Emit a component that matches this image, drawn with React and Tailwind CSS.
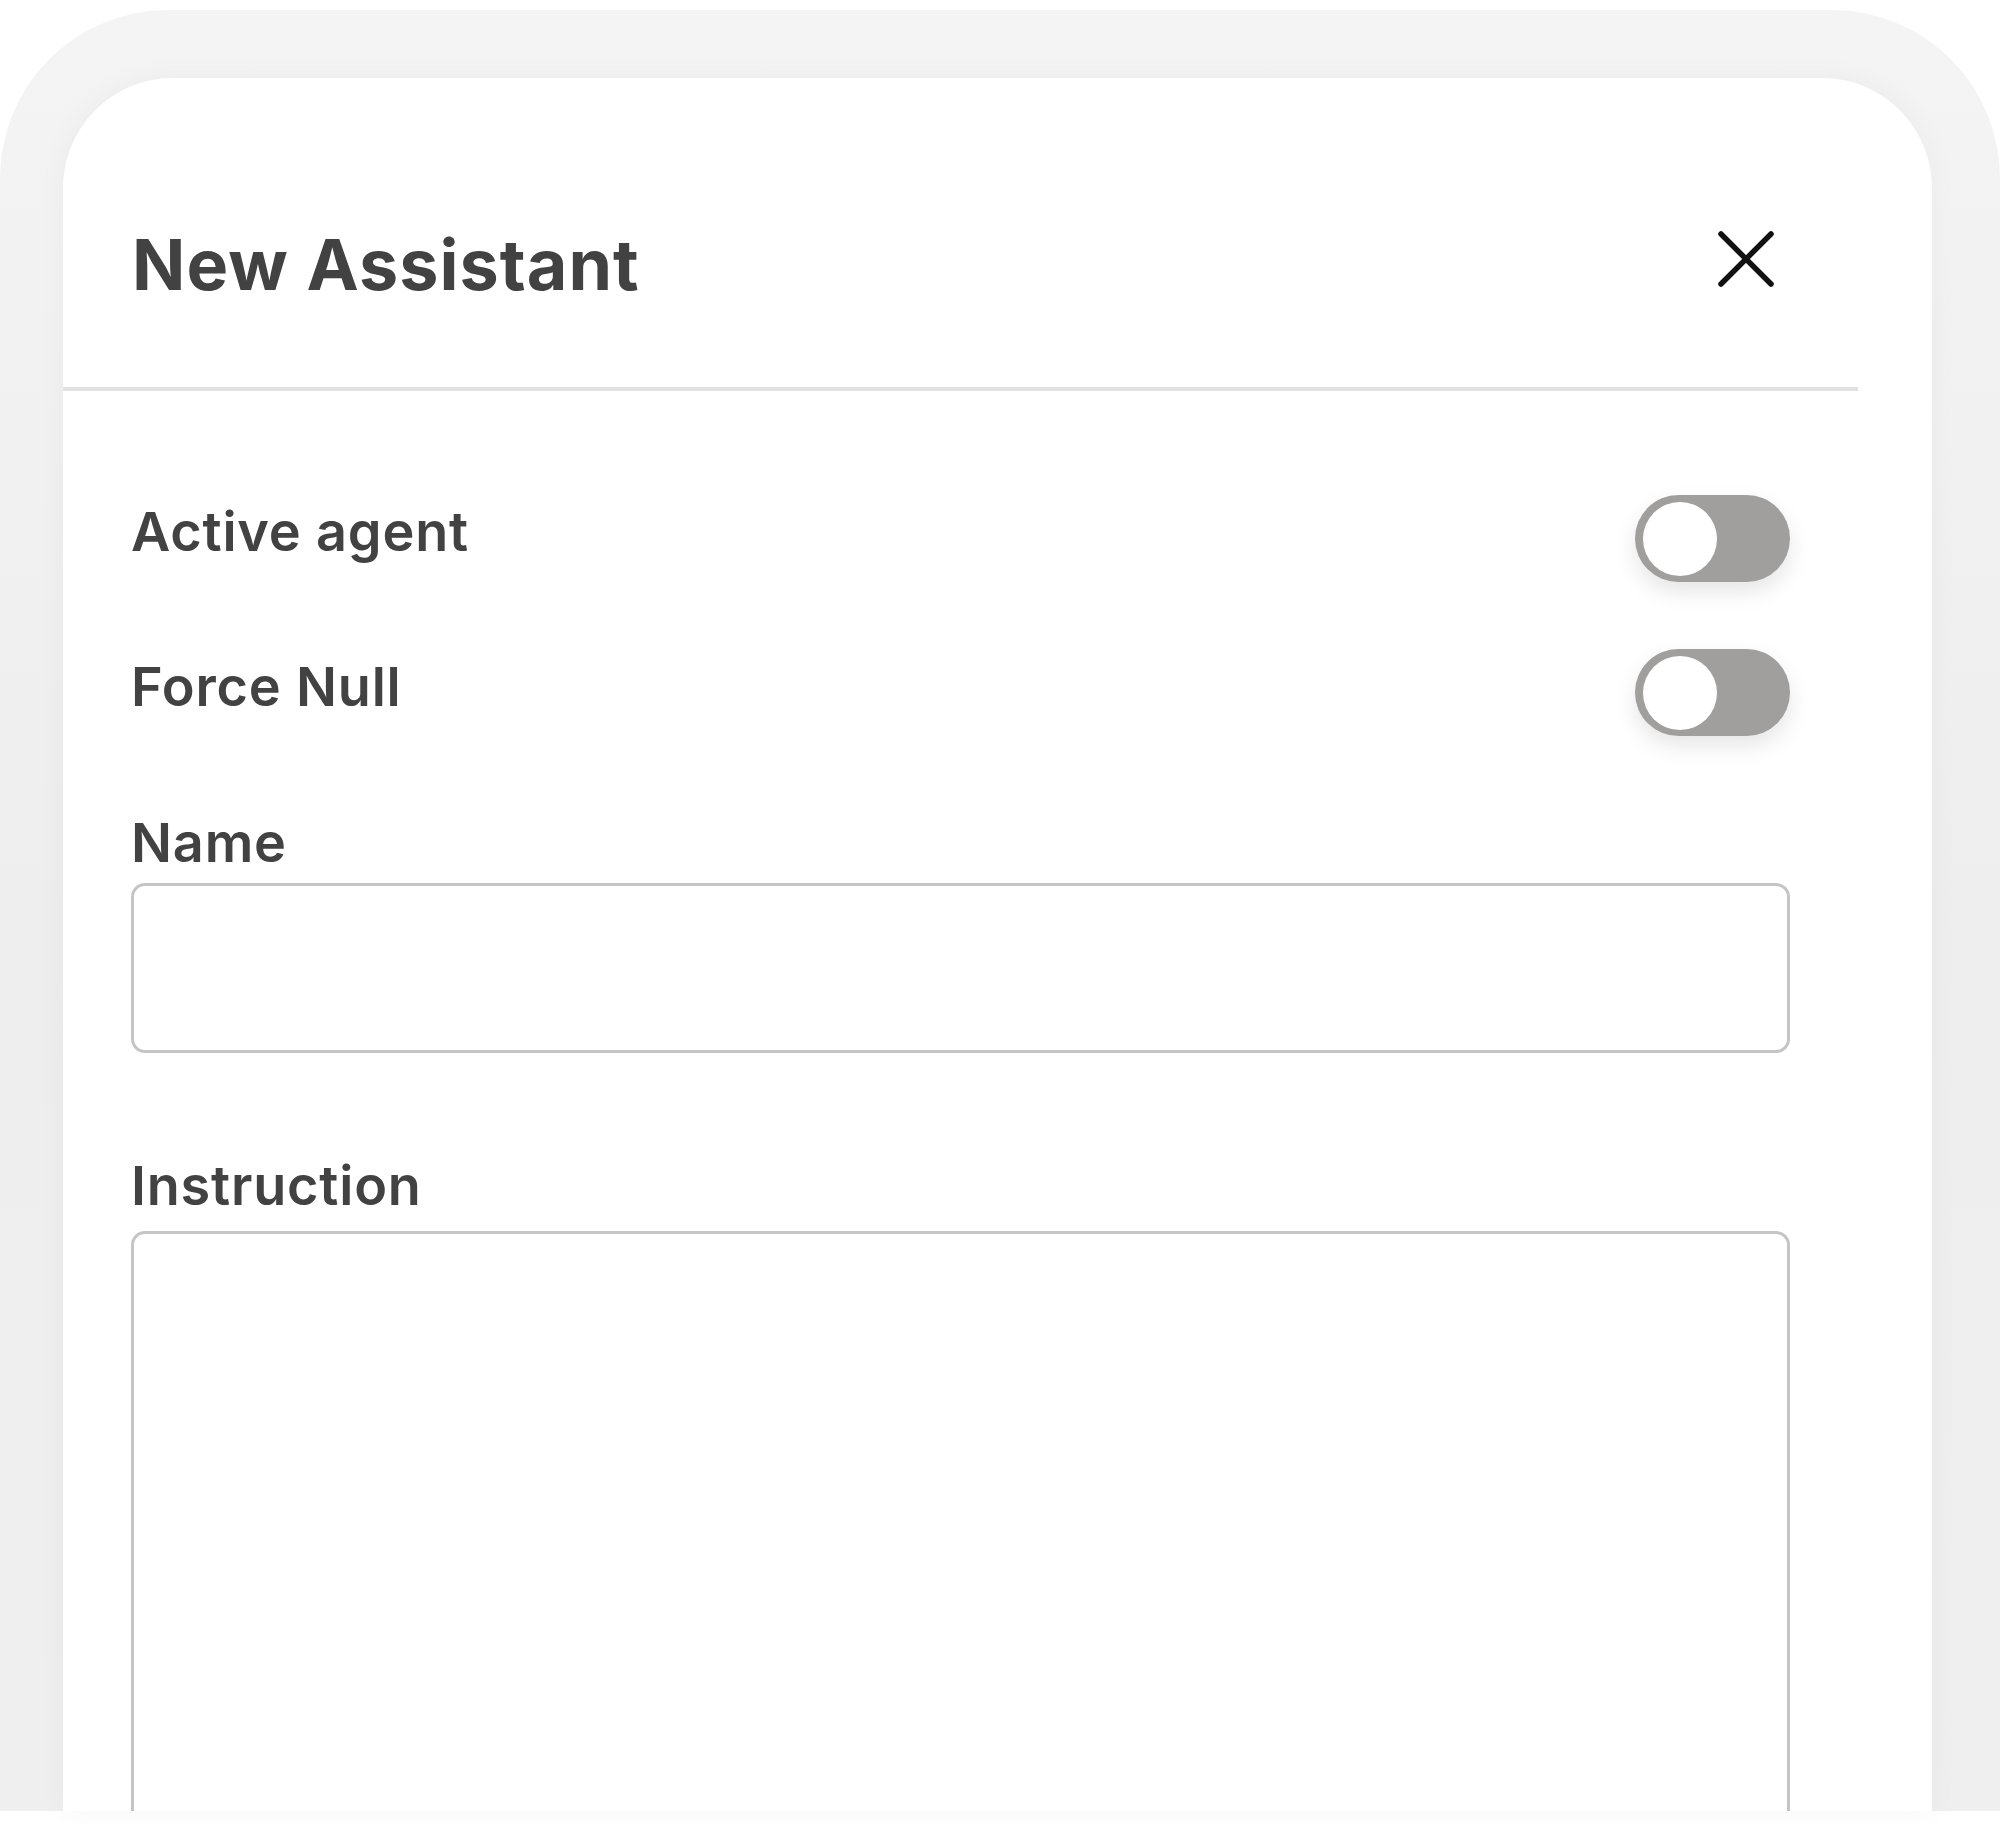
import { useState } from 'react'

const Toggle = ({ checked, onChange }) => {
    return (
        <button
            type="button"
            onClick={() => onChange(!checked)}
            className={`relative w-[155px] h-[87px] rounded-full shrink-0 shadow-[0_10px_22px_rgba(0,0,0,0.10)] transition-colors ${
                checked ? 'bg-[#3f3f3f]' : 'bg-[#a19f9e]'
            }`}
        >
            <span
                className={`absolute top-[7px] w-[74px] h-[74px] rounded-full bg-white transition-all ${
                    checked ? 'left-[74px]' : 'left-[8px]'
                }`}
            />
        </button>
    )
}

const CloseIcon = () => (
    <svg width="56" height="56" viewBox="0 0 56 56" fill="none">
        <path d="M3 3L53 53M53 3L3 53" stroke="#111" strokeWidth="5.5" strokeLinecap="round" />
    </svg>
)

export default function App() {
    const [active, setActive] = useState(false)
    const [forceNull, setForceNull] = useState(false)
    const [name, setName] = useState('')
    const [instruction, setInstruction] = useState('')

    return (
        <div className="w-[2000px] h-[1824px] bg-white overflow-hidden font-['Inter',sans-serif] text-[#424242]">
            <div className="mt-[10px] h-[1801px] bg-gradient-to-b from-[#f5f4f5] via-[#efeeef] to-[#f0eff0] rounded-t-[168px] pl-[63px] pr-[68px] pt-[68px]">
                <div className="h-full bg-white rounded-t-[110px] overflow-hidden shadow-[0_0_30px_rgba(0,0,0,0.04)]">
                    <div className="w-[1795px]">
                        <div className="h-[313px] pt-[64px] pl-[69px] pr-[84px] flex items-center justify-between border-b-4 border-[#e2e2e2]">
                            <h1 className="text-[70px] leading-none font-bold tracking-[0.015em]">New Assistant</h1>
                            <button type="button" className="mb-[12px]">
                                <CloseIcon />
                            </button>
                        </div>

                        <div className="px-[68px] pt-[104px]">
                            <div className="flex items-center justify-between">
                                <span className="text-[54px] leading-none font-semibold tracking-[0.015em] mb-[13px]">Active agent</span>
                                <Toggle checked={active} onChange={setActive} />
                            </div>

                            <div className="flex items-center justify-between mt-[67px]">
                                <span className="text-[54px] leading-none font-semibold tracking-[0.015em] mb-[11px]">Force Null</span>
                                <Toggle checked={forceNull} onChange={setForceNull} />
                            </div>

                            <label className="block mt-[80px] text-[54px] leading-none font-semibold tracking-[0.015em]">Name</label>
                            <input
                                type="text"
                                value={name}
                                onChange={(e) => setName(e.target.value)}
                                className="mt-[13px] block w-full h-[170px] border-[3px] border-[#c5c5c5] rounded-[14px] px-6 text-[48px] outline-none"
                            />

                            <label className="block mt-[106px] text-[54px] leading-none font-semibold tracking-[0.015em]">Instruction</label>
                            <textarea
                                value={instruction}
                                onChange={(e) => setInstruction(e.target.value)}
                                className="mt-[18px] block w-full h-[800px] border-[3px] border-[#c5c5c5] rounded-[14px] p-6 text-[48px] outline-none resize-none"
                            />
                        </div>
                    </div>
                </div>
            </div>
        </div>
    )
}
